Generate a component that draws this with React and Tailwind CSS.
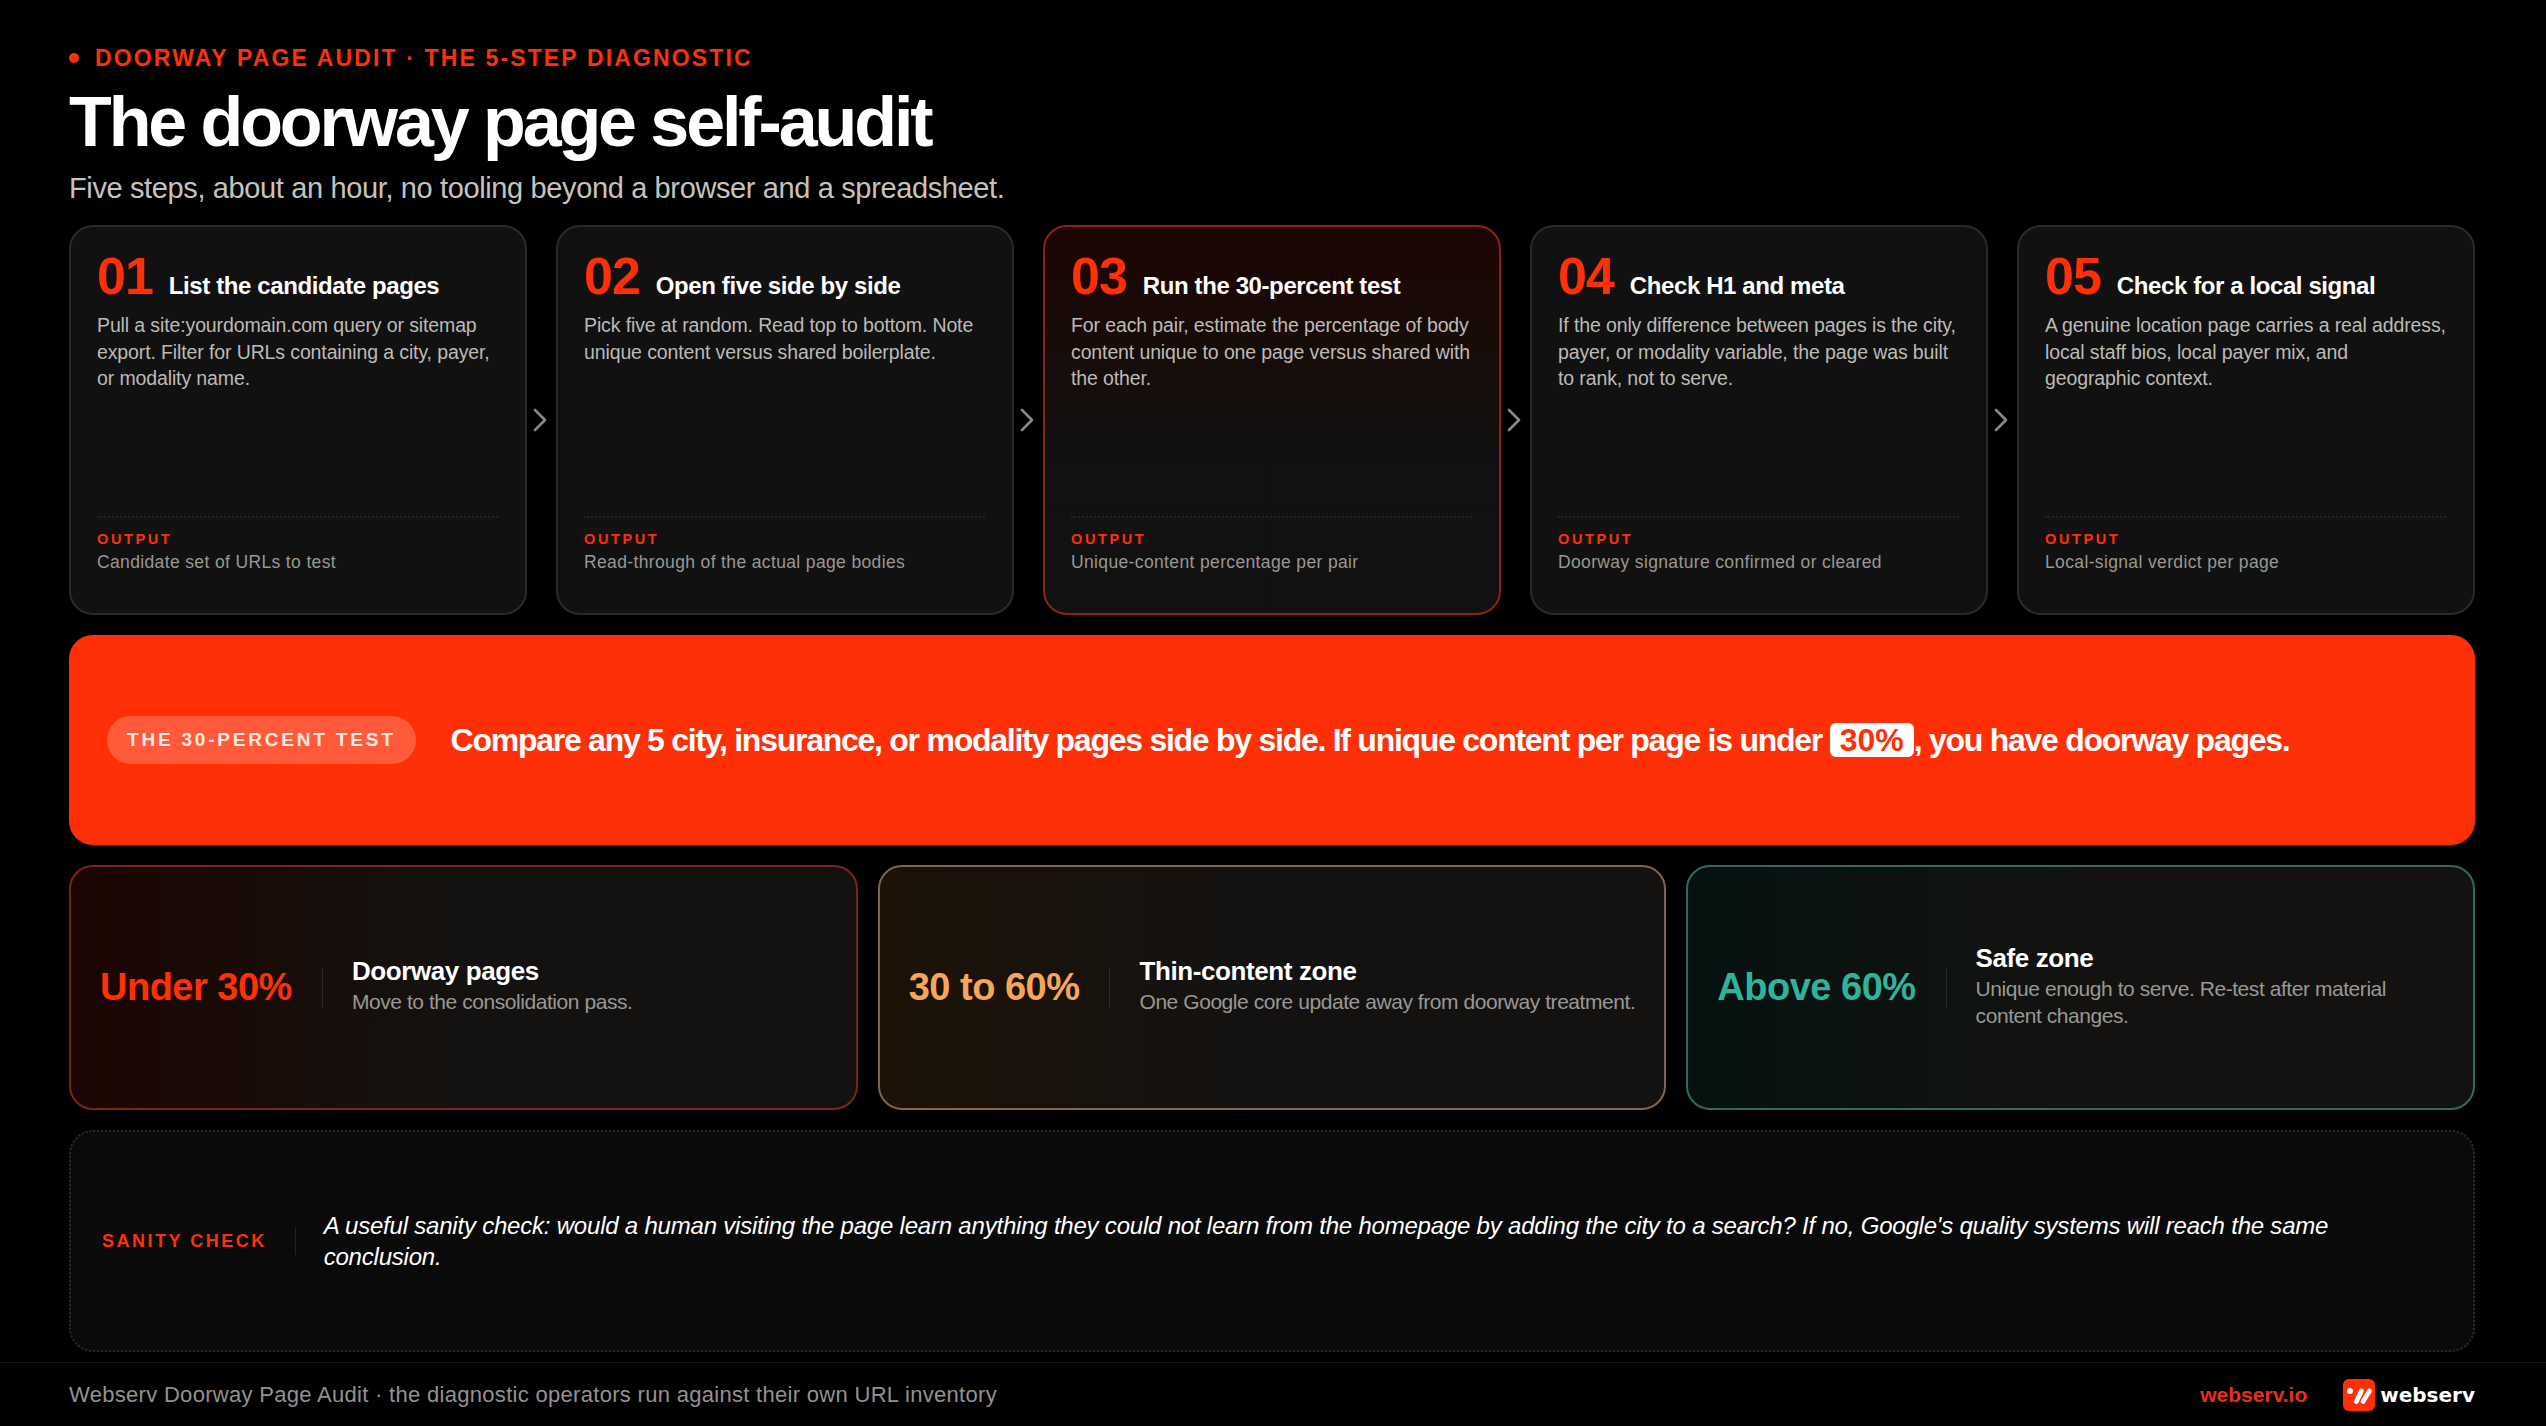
import { ChevronRight } from 'lucide-react'

const steps = [
  {
    n: '01',
    title: 'List the candidate pages',
    body: 'Pull a site:yourdomain.com query or sitemap export. Filter for URLs containing a city, payer, or modality name.',
    out: 'Candidate set of URLs to test',
  },
  {
    n: '02',
    title: 'Open five side by side',
    body: 'Pick five at random. Read top to bottom. Note unique content versus shared boilerplate.',
    out: 'Read-through of the actual page bodies',
  },
  {
    n: '03',
    title: 'Run the 30-percent test',
    body: 'For each pair, estimate the percentage of body content unique to one page versus shared with the other.',
    out: 'Unique-content percentage per pair',
    hot: true,
  },
  {
    n: '04',
    title: 'Check H1 and meta',
    body: 'If the only difference between pages is the city, payer, or modality variable, the page was built to rank, not to serve.',
    out: 'Doorway signature confirmed or cleared',
  },
  {
    n: '05',
    title: 'Check for a local signal',
    body: 'A genuine location page carries a real address, local staff bios, local payer mix, and geographic context.',
    out: 'Local-signal verdict per page',
  },
]

function StepCard({ step }) {
  return (
    <div
      className={
        'w-[458px] flex flex-col rounded-[24px] border-2 pl-[26px] pr-[27px] pt-[19px] pb-[40px] ' +
        (step.hot
          ? 'border-[#8a2418] bg-linear-to-b from-[#1c0502] to-[#111111] to-60%'
          : 'border-[#2a2a2a] bg-[#111111]')
      }
    >
      <div className="flex items-baseline gap-[16px]">
        <span className="text-[52px] leading-[60px] font-bold text-[#ff3008] tracking-[-1px]">{step.n}</span>
        <span className="text-[24px] font-bold text-white tracking-[-0.4px]">{step.title}</span>
      </div>
      <p className="mt-[6px] text-[19.5px] leading-[26.5px] text-[#bdbab6] tracking-[-0.12px]">{step.body}</p>
      <div className="mt-auto border-t-2 border-dotted border-[#222222] pt-[12px]">
        <div className="text-[14.5px] leading-[18px] font-bold tracking-[2.6px] text-[#ff3008]">OUTPUT</div>
        <div className="mt-[3px] text-[17.5px] leading-[22px] text-[#9a9794] tracking-[0.36px]">{step.out}</div>
      </div>
    </div>
  )
}

function ResultCard({ value, title, body, className, valueClass }) {
  return (
    <div className={'flex-1 min-w-0 flex items-center rounded-[24px] border-2 pl-[29px] pr-[20px] ' + className}>
      <span className={'text-[38px] font-bold tracking-[-0.5px] whitespace-nowrap ' + valueClass}>{value}</span>
      <div className="w-px h-[40px] bg-[#2a2a2a] ml-[30px] mr-[29px] shrink-0" />
      <div className="mb-[5px]">
        <div className="text-[26px] leading-[32px] font-bold text-white tracking-[-0.4px]">{title}</div>
        <div className="mt-[1px] text-[21px] leading-[27px] text-[#9a9794] tracking-[-0.44px]">{body}</div>
      </div>
    </div>
  )
}

export default function App() {
  return (
    <div className="w-[2546px] h-[1426px] bg-black flex flex-col font-['Liberation_Sans',Arial,sans-serif] overflow-hidden">
      <div className="flex-1 flex flex-col pl-[69px] pr-[71px] pt-[45px]">
        <div className="flex items-center gap-[16px] h-[26px]">
          <span className="w-[10px] h-[10px] rounded-full bg-[#ff3008]" />
          <span className="text-[23px] font-bold tracking-[2.14px] text-[#ff3008]">DOORWAY PAGE AUDIT · THE 5-STEP DIAGNOSTIC</span>
        </div>
        <h1 className="mt-[11px] text-[70px] leading-[80px] font-bold text-white tracking-[-3.1px]">The doorway page self-audit</h1>
        <p className="mt-[8px] text-[29px] leading-[36px] text-[#c6c3bf] tracking-[-0.37px]">Five steps, about an hour, no tooling beyond a browser and a spreadsheet.</p>

        <div className="mt-[19px] flex h-[390px]">
          {steps.map((s, i) => (
            <div key={s.n} className="flex">
              <StepCard step={s} />
              {i < 4 && (
                <div className="w-[29px] pr-[3px] flex items-center justify-center">
                  <ChevronRight className="w-[40px] h-[40px] shrink-0 text-[#8a8886]" strokeWidth={1.6} />
                </div>
              )}
            </div>
          ))}
        </div>

        <div className="mt-[20px] h-[210px] flex items-center rounded-[24px] bg-[#ff3008] px-[38px]">
          <span className="h-[48px] px-[20px] flex items-center rounded-full bg-[#ff5a3a] text-[19px] font-bold tracking-[2.8px] text-[#ffe9e3]">THE 30-PERCENT TEST</span>
          <span className="ml-[35px] text-[32px] font-bold text-white tracking-[-1.26px] whitespace-nowrap">
            Compare any 5 city, insurance, or modality pages side by side. If unique content per page is under{' '}
            <span className="inline-block bg-white text-[#ff3008] rounded-[6px] px-[10px] leading-[34px] tracking-[0px]">30%</span>, you have doorway pages.
          </span>
        </div>

        <div className="mt-[20px] h-[245px] flex gap-[20px]">
          <ResultCard
            value="Under 30%"
            title="Doorway pages"
            body="Move to the consolidation pass."
            className="border-[#7c2418] bg-linear-to-r from-[#1c0502] to-[#131211] to-50%"
            valueClass="text-[#ff3008]"
          />
          <ResultCard
            value="30 to 60%"
            title="Thin-content zone"
            body="One Google core update away from doorway treatment."
            className="border-[#85634a] bg-linear-to-r from-[#1c1206] to-[#131211] to-50%"
            valueClass="text-[#f5a65b]"
          />
          <ResultCard
            value="Above 60%"
            title="Safe zone"
            body="Unique enough to serve. Re-test after material content changes."
            className="border-[#2c6b60] bg-linear-to-r from-[#051210] to-[#131211] to-50%"
            valueClass="text-[#2fb39b]"
          />
        </div>

        <div className="mt-[20px] h-[222px] flex items-center rounded-[24px] border-2 border-dotted border-[#2a2a2a] bg-[#0a0a0a] px-[31px]">
          <span className="text-[18px] font-bold tracking-[2.5px] text-[#ff3008] whitespace-nowrap">SANITY CHECK</span>
          <div className="w-px h-[28px] bg-[#3a1a14] mx-[28px] shrink-0" />
          <p className="max-w-[2050px] text-[24px] leading-[31px] italic text-white tracking-[-0.21px]">
            A useful sanity check: would a human visiting the page learn anything they could not learn from the homepage by adding the city to a search? If no, Google's quality systems will reach the same conclusion.
          </p>
        </div>
      </div>

      <div className="h-[64px] border-t border-[#141414] flex items-center justify-between pl-[69px] pr-[71px]">
        <span className="text-[22px] text-[#94918e] tracking-[0.3px]">Webserv Doorway Page Audit · the diagnostic operators run against their own URL inventory</span>
        <div className="flex items-center gap-[36px]">
          <span className="text-[21px] font-bold text-[#e83018]">webserv.io</span>
          <div className="flex items-center gap-[5px]">
            <svg viewBox="0 0 32 32" className="w-[32px] h-[32px]">
              <rect width="32" height="32" rx="6" fill="#ff3008" />
              <circle cx="7" cy="12" r="3" fill="#fff" />
              <path d="M13.4 22.5 L18.3 12 M20 22.5 L26.4 12" stroke="#fff" strokeWidth="4.8" strokeLinecap="round" />
            </svg>
            <span className="text-[20px] font-['DejaVu_Sans',sans-serif] font-bold text-white">webserv</span>
          </div>
        </div>
      </div>
    </div>
  )
}
